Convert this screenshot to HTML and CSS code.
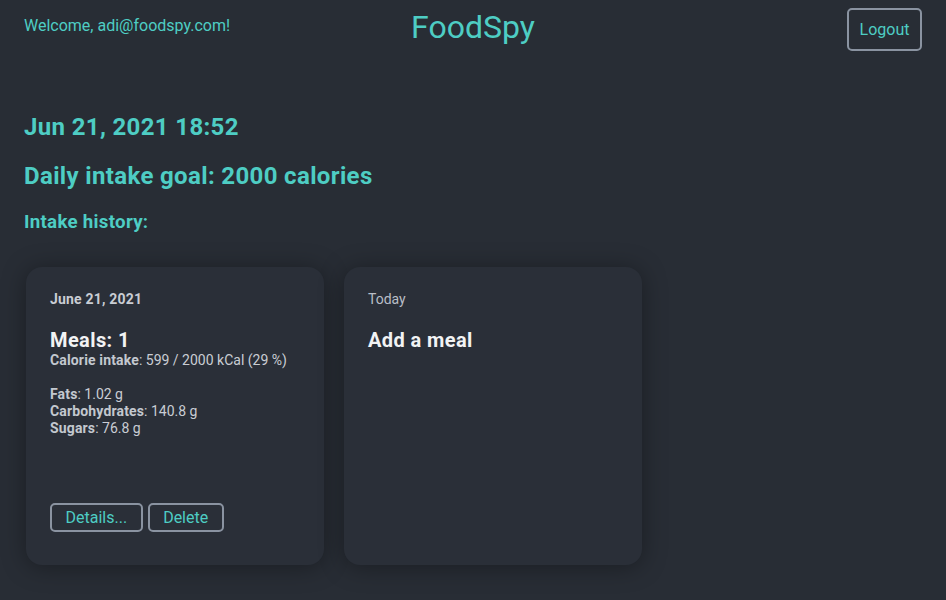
FILE: index.html
```html
<!DOCTYPE html>
<html>
<head>
<meta charset="utf-8">
<link rel="stylesheet" href="styles.css">
</head>
<body>
<header class="topbar">
  <div class="welcome">Welcome, adi@foodspy.com!</div>
  <div class="brand">FoodSpy</div>
  <div class="actions"><button class="btn btn-logout">Logout</button></div>
</header>
<main class="content">
  <h2 class="heading">Jun 21, 2021 18:52</h2>
  <h2 class="heading">Daily intake goal: 2000 calories</h2>
  <h3 class="subheading">Intake history:</h3>
  <div class="cards">
    <div class="card">
      <div class="card-date">June 21, 2021</div>
      <div class="card-title">Meals: 1</div>
      <div class="card-line"><b>Calorie intake</b>: 599 / 2000 kCal (29 %)</div>
      <div class="card-gap"></div>
      <div class="card-line"><b>Fats</b>: 1.02 g</div>
      <div class="card-line"><b>Carbohydrates</b>: 140.8 g</div>
      <div class="card-line"><b>Sugars</b>: 76.8 g</div>
      <div class="card-buttons">
        <button class="btn btn-small">Details...</button>
        <button class="btn btn-small">Delete</button>
      </div>
    </div>
    <div class="card">
      <div class="card-today">Today</div>
      <div class="card-title">Add a meal</div>
    </div>
  </div>
</main>
</body>
</html>
```

FILE: styles.css
```css
html, body {
  margin: 0;
  padding: 0;
  background: #282d35;
  font-family: Roboto, "Liberation Sans", sans-serif;
  color: #4ecdc4;
  height: 100%;
}

.topbar {
  display: grid;
  grid-template-columns: 1fr auto 1fr;
  align-items: start;
  padding: 8px 24px 0 24px;
}

.welcome {
  font-size: 16px;
  line-height: 19px;
  padding-top: 8px;
}

.brand {
  font-size: 32px;
  line-height: 38px;
  padding-top: 0;
}

.actions {
  display: flex;
  justify-content: flex-end;
}

.btn {
  font-family: Roboto, "Liberation Sans", sans-serif;
  background: transparent;
  color: #4ecdc4;
  border: 2px solid #8a93a1;
  border-radius: 5px;
  cursor: pointer;
}

.btn-logout {
  font-size: 16px;
  height: 43px;
  padding: 0 10.5px;
}

.content {
  padding: 0 24px;
  margin-top: 62px;
}

.heading {
  font-size: 24px;
  line-height: 28px;
  font-weight: 700;
  letter-spacing: 0.35px;
  margin: 0 0 21px 0;
}

.subheading {
  font-size: 18.72px;
  line-height: 22px;
  font-weight: 700;
  letter-spacing: 0.28px;
  margin: 1px 0 0 0;
}

.cards {
  display: flex;
  gap: 20px;
  padding: 34px 0 0 2px;
}

.card {
  width: 298px;
  height: 298px;
  box-sizing: border-box;
  background: #2a2f38;
  border-radius: 16px;
  box-shadow: 0 2px 24px rgba(0, 0, 0, 0.35);
  padding: 24px 24px 33px 24px;
  display: flex;
  flex-direction: column;
  color: #c9cdd4;
}

.card-date {
  font-size: 14px;
  line-height: 16px;
  font-weight: 700;
  letter-spacing: 0.2px;
  color: #c9cdd4;
}

.card-today {
  font-size: 14px;
  line-height: 16px;
  color: #b9bec6;
}

.card-title {
  font-size: 20px;
  line-height: 23px;
  font-weight: 700;
  letter-spacing: 0.4px;
  color: #f2f3f4;
  margin-top: 22px;
}

.card-line {
  font-size: 14px;
  line-height: 17px;
  color: #c9cdd4;
}

.card-line b {
  color: #c3c8cf;
  letter-spacing: 0.15px;
}

.card-gap {
  height: 17px;
}

.card-buttons {
  margin-top: auto;
  display: flex;
  gap: 5px;
}

.btn-small {
  font-size: 16px;
  height: 29px;
  padding: 0 13.5px;
}
```
